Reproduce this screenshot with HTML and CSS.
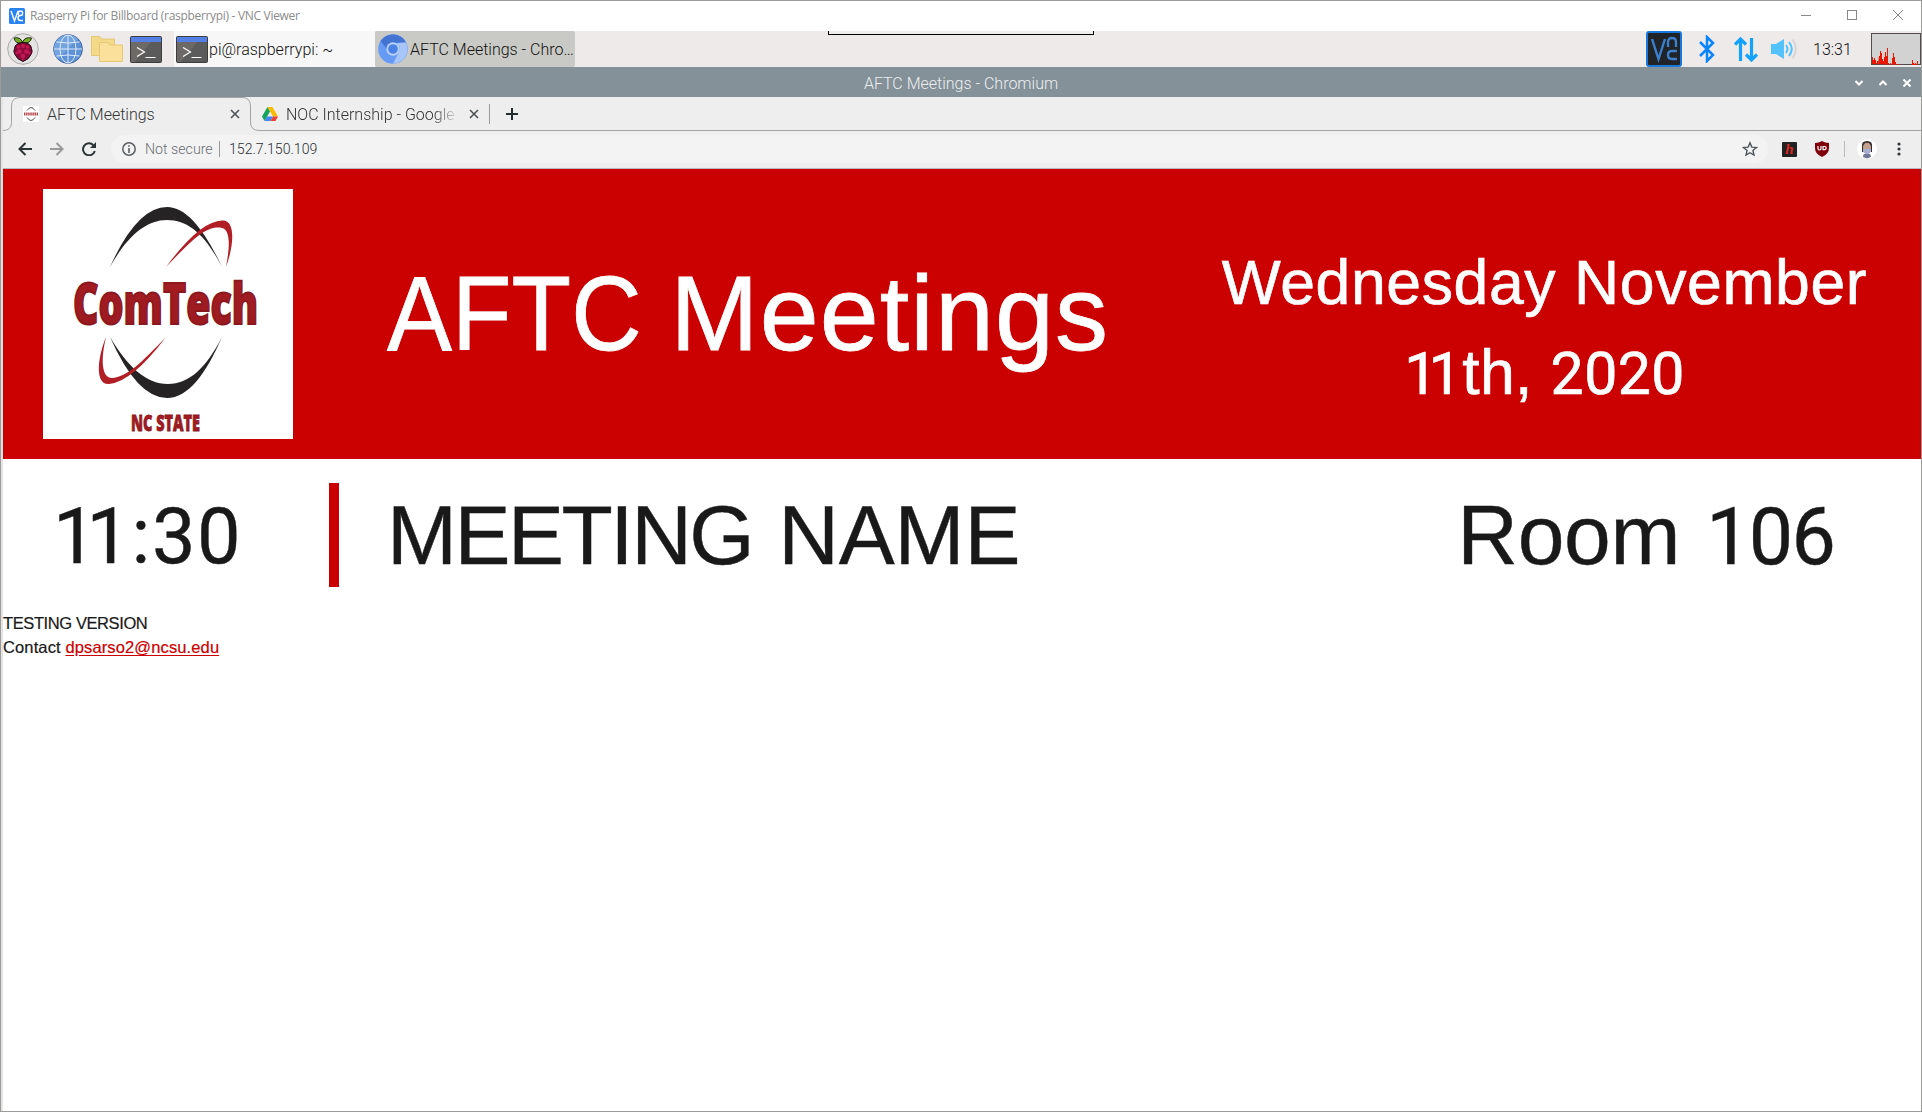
FILE: index.html
```html
<!DOCTYPE html>
<html lang="en">
<head>
<meta charset="utf-8">
<title>AFTC Meetings</title>
<link rel="stylesheet" href="styles.css">
</head>
<body>
<svg class="defs" width="0" height="0">
  <symbol id="terminal" viewBox="0 0 32 27">
    <rect x=".5" y=".5" width="31" height="26" rx="1" fill="#5b5b5b" stroke="#3c3c3c"/>
    <path d="M1 6h20L5 26H1z" fill="#6c6967"/>
    <rect x="1" y="1" width="30" height="5" fill="#5480e6"/>
    <path d="M7 11.500l7.500 4.500L7 20.500M15.500 21.500h10" fill="none" stroke="#fff" stroke-width="1.200"/>
  </symbol>
  <symbol id="cross" viewBox="0 0 10 10"><path d="M1 1l8 8M9 1l-8 8" fill="none" stroke="currentColor" stroke-width="1.600"/></symbol>
</svg>
<div class="window">
  <header class="titlebar">
    <svg width="16" height="16" viewBox="0 0 16 16"><rect width="16" height="16" rx="1.500" fill="#2a84f0"/><path d="M2 3l3.500 10L9 3M9.500 7V4.500q0-1.500 2-1.500t2 1.500V6q0 1.500-2 1.500-2.500 0-2.500 2.500t2.500 2.500H14" fill="none" stroke="#fff" stroke-width="1.400"/></svg>
    <span class="titlebar-name">Rasperry Pi for Billboard (raspberrypi) - VNC Viewer</span>
    <div class="titlebar-buttons">
      <svg width="10" height="10"><path d="M0 5.500h10" stroke="#888"/></svg>
      <svg width="10" height="10"><rect x=".5" y=".5" width="9" height="9" fill="none" stroke="#888"/></svg>
      <svg width="10" height="10"><path d="M0 0l10 10M10 0L0 10" stroke="#888"/></svg>
    </div>
  </header>

  <div class="panel">
    <div class="launchers">
      <svg class="raspberry" width="32" height="32" viewBox="0 0 32 32">
        <circle cx="16" cy="16" r="15.300" fill="#e4e4e4" stroke="#aaa"/>
        <path d="M15.500 10Q8 11 7 5q6-1.500 8.500 4Q18 3.500 24.500 5q-1 6-9 5z" fill="#75a928" stroke="#24300f"/>
        <path d="M16 9.500q8 .5 8.500 6 1.500 3-.5 6-2 5-8 7-6-2-8-7-2-3-.5-6 .5-5.500 8.500-6z" fill="#8d0b3a" stroke="#1c0710"/>
        <g fill="#c31852"><circle cx="16" cy="13" r="2"/><circle cx="11.500" cy="14" r="1.700"/><circle cx="20.500" cy="14" r="1.700"/><circle cx="12.500" cy="18.500" r="2.300"/><circle cx="19.500" cy="18.500" r="2.300"/><circle cx="16" cy="23" r="2.200"/><circle cx="9.500" cy="20" r="1.200"/><circle cx="22.500" cy="20" r="1.200"/><circle cx="16" cy="26.500" r="1"/></g>
      </svg>
      <svg class="globe" width="30" height="30" viewBox="0 0 30 30">
        <circle cx="15" cy="15" r="14.400" fill="#5d92d6" stroke="#486b9b"/>
        <path d="M5 25A14 14 0 0 1 25 5z" fill="#74a4df"/>
        <g fill="none" stroke="#dce8f8"><path d="M15 1v28M1 15h28M3.500 8q11.500 2 23 0M3.500 22q11.500-2 23 0"/><ellipse cx="15" cy="15" rx="8" ry="14"/></g>
      </svg>
      <svg class="folders" width="32" height="26" viewBox="0 0 32 26">
        <path d="M.5.500h8l2 2.500h13v16.500H.5z" fill="#f5d98b" stroke="#e6c774"/>
        <path d="M8.500 6.500h8l2 2.500h13v16.500h-23z" fill="#fae09a" stroke="#e6c774"/>
      </svg>
      <svg width="32" height="27"><use href="#terminal"/></svg>
    </div>
    <div class="task"><svg width="32" height="27"><use href="#terminal"/></svg><span>pi@raspberrypi: ~</span></div>
    <div class="task task-active">
      <svg width="30" height="30" viewBox="0 0 30 30">
        <circle cx="15" cy="15" r="14.800" fill="#659bf5"/>
        <path d="M2.500 7A14.800 14.800 0 0 1 28 8.500L15 9q-5 0-6 6z" fill="#4374d4"/>
        <path d="M28 8.500a14.800 14.800 0 0 1-13 21.300L21 18q2-5-2-9z" fill="#a8c5fa"/>
        <circle cx="15" cy="15" r="6.700" fill="#b9d2fb"/><circle cx="15" cy="15" r="4.800" fill="#4b82e5"/>
      </svg><span>AFTC Meetings - Chro…</span>
    </div>
    <div class="vnc-toolbar"></div>
    <div class="tray">
      <svg class="tray-vnc" width="36" height="36" viewBox="0 0 36 36"><rect x="1" y="1" width="34" height="34" rx="2" fill="#202328" stroke="#1878dc" stroke-width="2"/><path d="M6 8l6.500 20L19 8M22 16v-5q0-4 4-4t4 4v5M31 20h-5q-4 0-4 4t4 4h5" fill="none" stroke="#3c7fcb" stroke-width="2.400"/></svg>
      <svg class="tray-bt" width="16" height="28" viewBox="0 0 16 28"><path d="M1 7l13 13-6 6V2l6 6L1 21" fill="none" stroke="#0a84ff" stroke-width="2.500"/></svg>
      <svg class="tray-net" width="24" height="25" viewBox="0 0 24 25"><path d="M6.500 24V3M1 7.500L6.500 2 12 7.500M17.500 1v21M12 17.500l5.500 5.500 5.500-5.500" fill="none" stroke="#13a3ff" stroke-width="3.200"/></svg>
      <svg class="tray-vol" width="27" height="22" viewBox="0 0 27 22"><path d="M0 6h5l8-5v20l-8-5H0z" fill="#51c2fb"/><path d="M15 7q3 4 0 8M18 4q5.500 7 0 14" fill="none" stroke="#51c2fb" stroke-width="2"/><path d="M21.500 1.500q7 9.500 0 19" fill="none" stroke="#d6d6d8" stroke-width="2"/></svg>
      <span class="clock">13:31</span>
      <svg class="cpu" width="50" height="32" viewBox="0 0 50 32"><rect x=".5" y=".5" width="49" height="31" fill="#d2d2d2" stroke="#534b4c"/><path d="M1 31v-7h1v3h1v-2h1v2h1v3h1v-2h1v3l1-8h1v-5h1v2h1v6h1v2h1v-4h1v-5h1v4h1v-8h1v15h1v2h1v-2h1v2h1v-7h1v-5h1v4h1v5h1v3h1v-1h1v2h1v-2h1v2h12v-6h1v3h1v1h1v-1h1v2h1v-4h1v4z" fill="#eb1602"/></svg>
    </div>
  </div>

  <div class="wm-title">
    <span>AFTC Meetings - Chromium</span>
    <div class="wm-buttons">
      <svg width="8" height="8" viewBox="0 0 8 8"><path d="M.5 2L4 5.500 7.500 2"/></svg>
      <svg width="8" height="8" viewBox="0 0 8 8"><path d="M.5 6L4 2.500 7.500 6"/></svg>
      <svg width="8" height="8" viewBox="0 0 8 8"><path d="M.5.500l7 7M7.500.500l-7 7"/></svg>
    </div>
  </div>

  <main class="browser">
    <div class="tabs">
      <svg class="tab-outline" width="1918" height="34" viewBox="0 0 1918 34"><path d="M0 33.500q8.500 0 8.500-8V9q0-8.500 8.500-8.500h222q8.500 0 8.500 8.500v16q0 8.500 8.500 8.500H1918" fill="none" stroke="#a3a3a3"/></svg>
      <div class="tab">
        <svg width="16" height="16" viewBox="0 0 16 16"><rect width="16" height="16" fill="#fff"/><path d="M4 4.500q4-6 8 0M4 11.500q4 6 8 0" fill="none" stroke="#555"/><path d="M1 8h14" stroke="#b44a50" stroke-width="3" stroke-dasharray="1.500 .6"/></svg>
        <span class="tab-name">AFTC Meetings</span>
        <svg class="tab-close" width="10" height="10"><use href="#cross"/></svg>
      </div>
      <div class="tab">
        <svg width="16" height="14" viewBox="0 0 16 14"><path d="M5.500 0L0 9.500 2.500 14 8 4.500z" fill="#16a45b"/><path d="M5.500 0h5L16 9.500h-5z" fill="#fbbc05"/><path d="M5 9.500h6l-2.500 4.500h-6z" fill="#4285f4"/><path d="M11 9.500h5L13.500 14h-5z" fill="#ea4335"/></svg>
        <span class="tab-name tab-fade">NOC Internship - Google D</span>
        <svg class="tab-close" width="10" height="10"><use href="#cross"/></svg>
      </div>
      <i class="tab-sep"></i>
      <svg class="tab-new" width="12" height="12"><path d="M6 0v12M0 6h12" stroke="#222c2c" stroke-width="2"/></svg>
    </div>
    <div class="toolbar">
      <svg width="14" height="14" viewBox="0 0 14 14"><path d="M14 7H2M7.500 1L1.500 7l6 6" fill="none" stroke="#2c3436" stroke-width="2"/></svg>
      <svg width="14" height="14" viewBox="0 0 14 14"><path d="M0 7h12M6.500 1l6 6-6 6" fill="none" stroke="#999" stroke-width="2"/></svg>
      <svg width="14" height="14" viewBox="0 0 14 14"><path d="M11.500 3.300A6 6 0 1 0 12.800 9" fill="none" stroke="#2c3436" stroke-width="2"/><path d="M14 0v6H8z" fill="#2c3436"/></svg>
      <div class="omnibox">
        <svg width="14" height="14" viewBox="0 0 14 14"><circle cx="7" cy="7" r="6.200" fill="none" stroke="#5b6064" stroke-width="1.500"/><path d="M7 3.200v1.600M7 6v5" stroke="#5b6064" stroke-width="1.600"/></svg>
        <span class="insecure">Not secure</span>
        <i></i>
        <span class="address">152.7.150.109</span>
        <svg class="star" width="16" height="16" viewBox="0 0 16 16"><path d="M8 1.800l1.800 4.300 4.700.4-3.600 3 1.100 4.600L8 11.700l-4 2.400 1.100-4.600-3.600-3 4.700-.4z" fill="none" stroke="#50575b" stroke-width="1.400"/></svg>
      </div>
      <div class="extensions">
        <span class="ext-h">h</span>
        <svg class="ext-ud" width="14" height="16" viewBox="0 0 14 16"><path d="M7 0q3 2 7 2v5q0 6-7 9-7-3-7-9V2q4 0 7-2z" fill="#800009"/><path d="M3 5v2.500q0 1.500 1.500 1.500T6 7.500V5M8 5.500v3.200h1.500q1.700 0 1.700-1.600T9.500 5.500z" fill="none" stroke="#fff" stroke-width="1.200"/></svg>
        <i></i>
        <svg class="avatar" width="20" height="20" viewBox="0 0 20 20"><circle cx="10" cy="10" r="10" fill="#fff"/><path d="M5 8q-1-6 5-6t5 6v5H5z" fill="#3a302d"/><ellipse cx="10" cy="8.500" rx="4" ry="4.800" fill="#c5a18f"/><path d="M6 10h8v3l-4 3-4-3z" fill="#a9afd0"/><path d="M6 18q0-4 4-3 4-1 4 3l-4 1.500z" fill="#737898"/></svg>
        <svg class="menu" width="4" height="14" viewBox="0 0 4 14"><circle cx="2" cy="2" r="1.600"/><circle cx="2" cy="7" r="1.600"/><circle cx="2" cy="12" r="1.600"/></svg>
      </div>
    </div>

    <section class="board">
      <div class="banner">
        <svg class="logo" width="250" height="250" viewBox="0 0 250 250">
          <defs><linearGradient id="emboss" x2="0" y2="1"><stop offset="0" stop-color="#c4343b"/><stop offset=".15" stop-color="#a51c22"/><stop offset="1" stop-color="#981a20"/></linearGradient></defs>
          <rect width="250" height="250" fill="#fff"/>
          <path d="M67 78Q94 18 124 18c20 0 38 24 55 60-16-31-33-47-55-47-22 0-41 18-57 47z" fill="#262324"/>
          <path d="M67 148q27 61 57 61c21 0 39-24 55-61-16 31-33 47-54 47-22 0-41-18-58-47z" fill="#262324"/>
          <path d="M123 78Q157 32 179 31.500c14-1 12 25 4 46.500 4-21 5-39-6-39.500C162 37 148 52 123 78z" fill="#b11e26"/>
          <path d="M123 148q-34 45-57 47c-14 1-12-25-3-47-5 21-5 41 6 41 15-1 29-15 54-41z" fill="#b11e26"/>
          <g class="logo-text" fill="url(#emboss)" stroke="#8a181d">
            <text x="30" y="134.500" font-size="57" stroke-width="2" textLength="185" lengthAdjust="spacingAndGlyphs">ComTech</text>
            <text x="88" y="242" font-size="23" stroke-width=".8" textLength="69" lengthAdjust="spacingAndGlyphs">NC STATE</text>
          </g>
        </svg>
        <h1><span class="title-org">AFTC</span> Meetings</h1>
        <p class="date"><span class="date-a">Wednesday November</span><br><span class="date-b"><span class="num"><span class="pair">1</span>1</span>th, <span class="num">2020</span></span></p>
      </div>
      <div class="meeting">
        <span class="meeting-time"><span class="pair">1</span>1:30</span>
        <span class="meeting-name"><span class="name-first">MEETING</span> NAME</span>
        <span class="meeting-room">Room <span class="num">106</span></span>
      </div>
      <div class="note"><span class="note-version">TESTING VERSION</span><br>Contact <a href="mailto:dpsarso2@ncsu.edu">dpsarso2@ncsu.edu</a></div>
    </section>
  </main>
</div>
</body>
</html>
```
FILE: styles.css
```css
* { box-sizing: border-box; }
body { margin: 0; background: #fff; font-family: Roboto, sans-serif; font-weight: 300; }
svg { display: block; flex: none; }
span { white-space: nowrap; }
.defs { position: absolute; }
.window { width: 1922px; height: 1112px; border: 1px solid #9b9b99; overflow: hidden; background: #fff; display: flex; flex-direction: column; }

.titlebar { flex: none; height: 30px; display: flex; align-items: center; padding-left: 8px; }
.titlebar-name { margin-left: 5px; padding-bottom: 1px; font: 400 12px "Open Sans", sans-serif; letter-spacing: -.31px; color: #8b8b8b; }
.titlebar-buttons { margin-left: auto; display: flex; gap: 36px; padding: 0 18px 2px 0; }

.panel { flex: none; height: 36px; display: flex; align-items: center; background: #eeeae9; position: relative; font-size: 16px; color: #111; }
.launchers { width: 173px; display: flex; align-items: center; padding-left: 6px; }
.globe { margin-left: 14px; }
.folders { margin: 0 7px 0 8px; }
.task { width: 201px; height: 36px; background: #f7f7f7; display: flex; align-items: center; padding-left: 2px; gap: 1px; }
.task-active { width: 200px; background: #c9cac5; border-radius: 2px; padding-left: 3px; gap: 2px; }
.vnc-toolbar { position: absolute; left: 827px; top: 0; width: 266px; height: 4px; background: #f0efee; border: 1px solid #000; border-top: 0; }
.tray { margin-left: auto; display: flex; align-items: center; }
.tray-bt { margin-left: 17px; }
.tray-net { margin-left: 19px; }
.tray-vol { margin-left: 13px; }
.clock { width: 37px; margin: 0 21px 0 15px; font-size: 16px; }

.wm-title { flex: none; height: 30px; background: #849198; color: #eceff1; display: flex; align-items: center; justify-content: center; position: relative; font-size: 16px; padding-top: 3px; }
.wm-buttons { position: absolute; right: 10px; top: 12px; display: flex; gap: 16px; fill: none; stroke: #fff; stroke-width: 2; }

.browser { flex: 1; border-left: 2px solid #e4e4e4; }
.tabs { height: 34px; background: #eee; display: flex; align-items: center; position: relative; color: #333; font-size: 16px; }
.tab-outline { position: absolute; left: 0; top: 0; }
.tab { display: flex; align-items: center; width: 239px; padding-left: 20px; }
.tab-name { width: 180px; margin-left: 8px; overflow: hidden; }
.tab-close { color: #4d5255; margin-left: 3px; }
.tab-fade { overflow: visible; -webkit-mask-image: linear-gradient(90deg, #000 82%, transparent 96%); }
.tab-sep { width: 1px; height: 20px; background: #999; margin-left: 8px; }
.tab-new { margin-left: 16px; }
.toolbar { height: 38px; background: #eee; border-bottom: 1px solid #b9b9b9; display: flex; align-items: center; padding: 0 0 1px 15px; gap: 18px; }
.omnibox { width: 1657px; height: 28px; border-radius: 14px; background: #f3f3f3; display: flex; align-items: center; padding-left: 11px; margin-left: -3px; font-size: 14.1px; }
.insecure { width: 67px; margin-left: 9px; color: #6b6f72; font-size: 14.2px; }
.omnibox i { width: 1px; height: 16px; background: #999; margin: 0 9px 0 7px; }
.address { color: #2c3033; }
.star { margin-left: auto; margin-right: 10px; }
.extensions { display: flex; align-items: center; margin-left: -4px; }
.ext-h { width: 15px; height: 15px; border-radius: 1px; background: #222; color: #dc2722; font: italic 700 15px/14px "Liberation Serif", serif; text-align: center; }
.ext-ud { margin-left: 18px; }
.extensions i { width: 1px; height: 16px; background: #bbb; margin-left: 15px; }
.avatar { margin-left: 12px; }
.menu { margin-left: 20px; fill: #30363a; }

.board { font-family: "Liberation Sans", Arial, sans-serif; font-weight: 400; color: #191919; }
.banner { height: 290px; background: #cb0000; color: #fff; display: flex; padding: 20px 0 0 40px; }
.logo-text { font-family: "Open Sans", sans-serif; font-weight: 800; }
h1 { flex: none; width: 760px; margin: 62px 0 0 94px; font-size: 106px; line-height: 124px; font-weight: 400; letter-spacing: 1.1px; white-space: nowrap; -webkit-text-stroke: .8px currentColor; }
.title-org { display: inline-block; letter-spacing: 0; transform: scaleX(.92); transform-origin: 0 50%; margin-right: -24px; }
.date { flex: none; width: 755px; margin: 48px 0 0 20px; text-align: center; font-size: 62.5px; line-height: 90px; -webkit-text-stroke: .7px currentColor; }
.date-a { letter-spacing: .6px; }
.date-b { letter-spacing: .4px; }
.date-b .num { font-size: 59px; line-height: 0; }
.date-b .pair { letter-spacing: -8.7px; }
.num { font-family: Roboto, sans-serif; }
.meeting { height: 104px; margin-top: 24px; display: flex; line-height: 104px; font-size: 84px; -webkit-text-stroke: .4px currentColor; }
.meeting-time { width: 336px; border-right: 10px solid #cb0000; padding: 2px 0 0 50px; font-family: Roboto, sans-serif; font-size: 77.5px; letter-spacing: 1.5px; }
.meeting-time .pair { letter-spacing: -10px; }
.meeting-name { margin-left: 48px; letter-spacing: -.2px; }
.name-first { letter-spacing: -2.5px; margin-right: 3px; }
.meeting-room { margin-left: auto; margin-right: 87px; letter-spacing: -.3px; }
.meeting-room .num { font-size: 79px; line-height: 0; letter-spacing: -1.8px; margin-left: 3px; }
.note { margin-top: 24px; font-size: 16.5px; line-height: 24px; letter-spacing: .12px; -webkit-text-stroke: .2px currentColor; }
.note-version { letter-spacing: -.4px; }
.note a { color: #cb0000; letter-spacing: .13px; text-underline-offset: 2px; }
```
